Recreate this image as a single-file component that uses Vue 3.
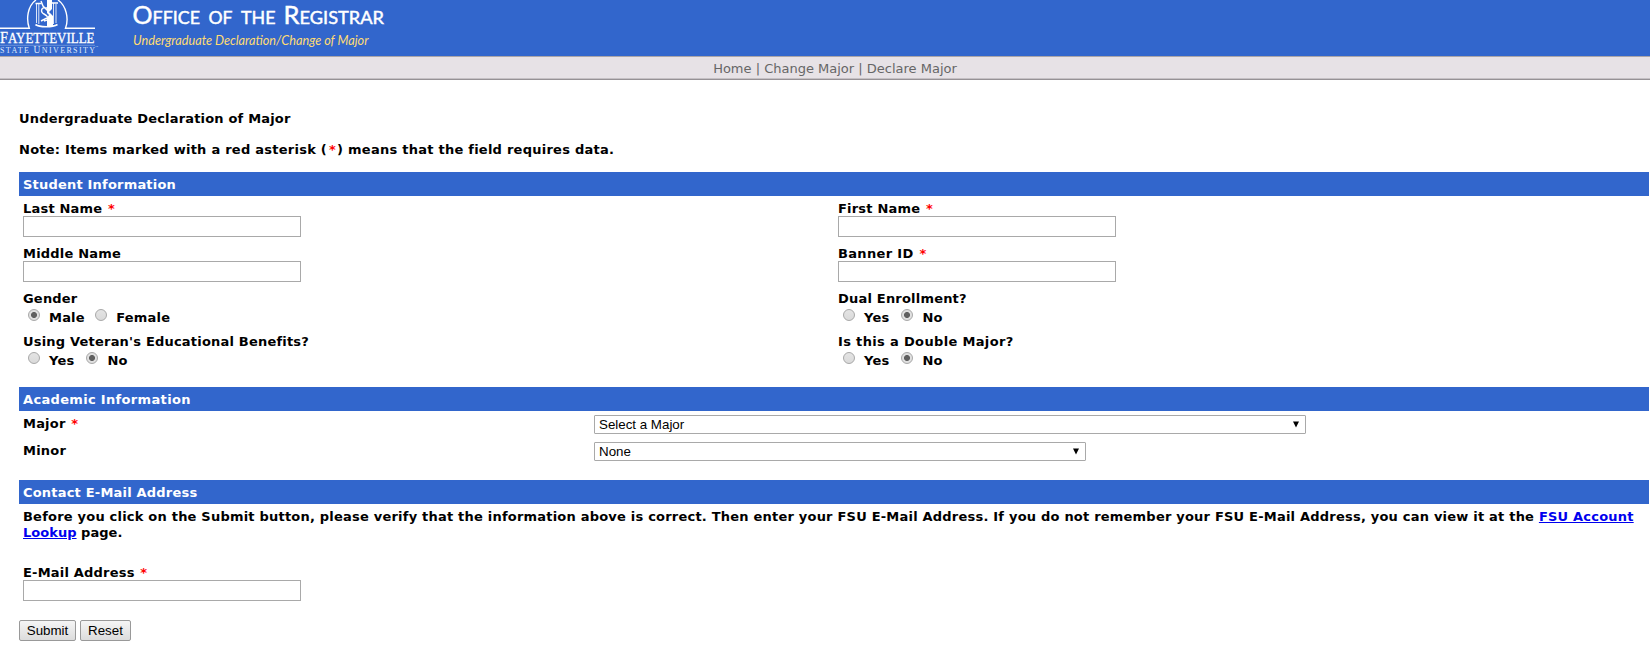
<script setup>
import { reactive } from 'vue'

const rows = [
  [{ label: 'Last Name', required: true, key: 'last' }, { label: 'First Name', required: true, key: 'first' }],
  [{ label: 'Middle Name', key: 'middle' }, { label: 'Banner ID', required: true, key: 'banner' }],
  [
    { label: 'Gender', options: ['Male', 'Female'], key: 'gender' },
    { label: 'Dual Enrollment?', options: ['Yes', 'No'], key: 'dual' }
  ],
  [
    { label: "Using Veteran's Educational Benefits?", options: ['Yes', 'No'], key: 'veteran' },
    { label: 'Is this a Double Major?', options: ['Yes', 'No'], key: 'double' }
  ]
]

const form = reactive({
  last: '', first: '', middle: '', banner: '', email: '',
  gender: 'Male', dual: 'No', veteran: 'No', double: 'No'
})
</script>

<template>
  <div class="page">
    <header class="banner">
      <svg class="brand" width="400" height="56" viewBox="0 0 400 56">
        <g fill="none" stroke="#fff">
          <path d="M0 28.2H29.300C26 19 27.500 6 36 0M58 0C66.500 6 69 19 65.500 28.200H95" stroke-width="1.400" />
          <path d="M0 45.300H95" stroke="#83a3e0" stroke-width=".7" />
          <path d="M36.500 4v19M38.800 3v21M53.500 3v21M56 4v19" stroke-width="1" stroke="#dbe5f8" />
          <path d="M35.500 24.500c4 3 17 3 22 0M35.500 3.500h6M51 3h7" stroke-width="1.700" />
          <path d="M47 8c-6-2-7 4-3 6s7 6 0 7M41 1l2 5 5 5M41 21l6-3" stroke-width="1.400" />
        </g>
        <path d="M47 0h5v9l-3 3 4 4v10h-6v-8l2-3-2-2z" fill="#fff" />
        <g class="serif">
          <text x="0" y="42.500" textLength="94.500" lengthAdjust="spacingAndGlyphs"><tspan font-size="16">F</tspan><tspan font-size="14.500">AYETTEVILLE</tspan></text>
          <text class="state" x="0" y="52.500" font-size="8" textLength="95"><tspan>STATE </tspan><tspan font-size="9.500">U</tspan><tspan>NIVERSITY</tspan></text>
          <text class="state" x="95" y="47" font-size="2">TM</text>
        </g>
        <g class="title">
          <text x="132.500" y="24" textLength="67.500" lengthAdjust="spacingAndGlyphs"><tspan class="cap">O</tspan>FFICE</text>
          <text x="208.500" y="24" textLength="24" lengthAdjust="spacingAndGlyphs">OF</text>
          <text x="241" y="24" textLength="34.500" lengthAdjust="spacingAndGlyphs">THE</text>
          <text x="283.500" y="24" textLength="100.500" lengthAdjust="spacingAndGlyphs"><tspan class="cap">R</tspan>EGISTRAR</text>
        </g>
        <text class="subtitle" x="133" y="45.300" textLength="235.500" lengthAdjust="spacingAndGlyphs">Undergraduate Declaration/Change of Major</text>
      </svg>
    </header>
    <nav class="nav"><a>Home</a> | <a>Change Major</a> | <a>Declare Major</a></nav>

    <main class="content">
      <p class="intro">Undergraduate Declaration of Major</p>
      <p class="note">Note: Items marked with a red asterisk (<span class="red">*</span>) means that the field requires data.</p>

      <h2 class="bar">Student Information</h2>
      <div class="student">
        <template v-for="(row, i) in rows" :key="i">
          <div v-for="f in row" :key="f.key" class="cell" :class="f.key">
            <div class="label">{{ f.label }} <span v-if="f.required" class="red">*</span></div>
            <div v-if="f.options" class="radios">
              <label v-for="o in f.options" :key="o" class="radio">
                <input v-model="form[f.key]" type="radio" :name="f.key" :value="o"><span>{{ o }}</span>
              </label>
            </div>
            <input v-else v-model="form[f.key]" class="field" type="text">
          </div>
        </template>
      </div>

      <h2 class="bar wide">Academic Information</h2>
      <div class="academic">
        <div class="label">Major <span class="red">*</span></div>
        <div class="select major"><span>Select a Major</span><svg width="6" height="7"><path d="M0 .5h6L3 6.500z" /></svg></div>
        <div class="label">Minor</div>
        <div class="select minor"><span>None</span><svg width="6" height="7"><path d="M0 .5h6L3 6.500z" /></svg></div>
      </div>

      <h2 class="bar">Contact E-Mail Address</h2>
      <p class="verify"><span class="line">Before you click on the Submit button, please verify that the information above is correct. Then enter your FSU E-Mail Address. If you do not remember your FSU E-Mail Address, you can view it at the <a>FSU Account</a></span><br><a>Lookup</a> page.</p>
      <div class="email">
        <div class="label">E-Mail Address <span class="red">*</span></div>
        <input v-model="form.email" class="field" type="text">
      </div>
      <div class="actions">
        <button class="submit">Submit</button>
        <button class="reset">Reset</button>
      </div>
    </main>
  </div>
</template>

<style>
body { background: #fff; overflow: hidden; }
</style>

<style scoped>
.page { width: 1650px; height: 671px; font: 13px/16px Verdana, "DejaVu Sans", sans-serif; color: #000; }
.banner { height: 56px; background: #3266cc; }
.brand { display: block; }
.serif { font-family: "Liberation Serif", serif; fill: #fff; stroke: #fff; stroke-width: .3px; }
.state { stroke: none; fill: #dfe8fa; }
.title { font: 17.5px Lato, sans-serif; fill: #fff; stroke: #fff; stroke-width: .45px; }
.cap { font-size: 24.5px; }
.subtitle { font: italic 13.5px Lato, sans-serif; fill: #ffdc73; }
.nav { box-sizing: border-box; height: 24px; padding: 4px 0 0 20px; border-top: 1px solid #aaa5a9; border-bottom: 1px solid #969195; box-shadow: inset 0 -1px #c5c0c4; background: #e7e2e6; color: #666; text-align: center; }
.content { padding-left: 19px; font-weight: bold; letter-spacing: .2px; }
p, h2 { margin: 0; font-size: 13px; }
.intro { padding-top: 31px; letter-spacing: .18px; }
.note { padding-top: 15px; letter-spacing: .25px; }
.bar { box-sizing: border-box; height: 24px; line-height: 24px; padding: 1px 0 0 4px; margin-right: 1px; background: #3266cc; color: #fff; }
.bar.wide { letter-spacing: .33px; }
.note + .bar { margin-top: 14px; }
.red { color: #f00; margin-left: 1px; }
.note .red { margin: 0 1px 0 2px; }
.student { display: grid; grid-template-columns: 815px 1fr; grid-template-rows: 45px 45px 43px 58px; padding-left: 4px; }
.cell { padding-top: 5px; }
.label { height: 16px; white-space: nowrap; }
.double .label, .banner .label { letter-spacing: .34px; }
.cell.banner { height: auto; background: none; }
.field { display: block; box-sizing: border-box; width: 278px; height: 21px; border: 1px solid #a9a9a9; padding: 1px 2px; margin: -1px 0 0; background: #fff; outline: none; border-radius: 0; }
.radios { display: flex; padding-left: 5px; padding-top: 3px; }
.radio { display: flex; margin-right: 10px; }
.radio span { min-width: 27px; }
.radio input { appearance: none; box-sizing: border-box; flex: none; width: 12px; height: 12px; margin: -1px 9px 0 0; border: 1px solid #a8a8a8; border-radius: 50%; background: linear-gradient(#e4e4e4, #dadada); }
.radio + .radio input { margin-right: 9.5px; }
.radio input:checked { background: radial-gradient(circle, #606060 0 2.6px, #e0e0e0 3.4px); }
.academic { display: grid; grid-template-columns: 571px 1fr; grid-template-rows: 27px 42px; padding-left: 4px; }
.academic .label { padding-top: 5px; }
.select { box-sizing: border-box; display: flex; justify-content: space-between; align-items: center; height: 19px; margin-top: 4px; padding: 0 6px 0 4px; border: 1px solid #a9a9a9; border-radius: 1px; font: 13.333px/17px Arial, "Liberation Sans", sans-serif; letter-spacing: 0; }
.major { width: 712px; }
.minor { width: 492px; }
.verify { padding: 5px 0 0 4px; white-space: nowrap; letter-spacing: .03px; }
.verify .line { letter-spacing: .212px; }
.verify a { color: #0000ee; text-decoration: underline; }
.email { padding: 24px 0 0 4px; }
.actions { display: flex; gap: 4px; margin-top: 19px; }
button { box-sizing: border-box; height: 21px; padding: 0; border: 1px solid #999; border-radius: 2px; background: linear-gradient(#f5f5f5, #dcdcdc); color: #000; font: 13.333px Arial, "Liberation Sans", sans-serif; letter-spacing: 0; }
.submit { width: 57px; }
.reset { width: 51px; }
</style>
